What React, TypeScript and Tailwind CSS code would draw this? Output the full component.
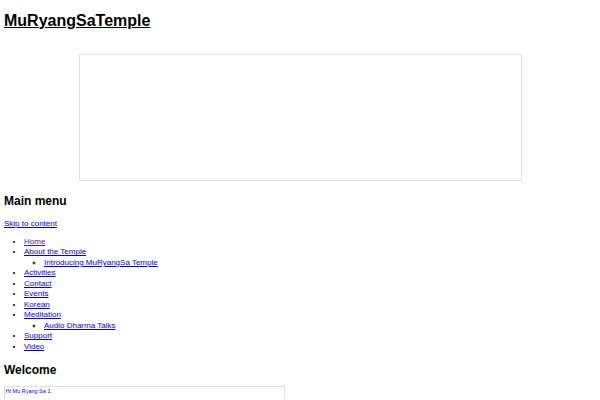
import React from "react";

const menu: { label: string; visited?: boolean; children?: string[] }[] = [
  { label: "Home", visited: true },
  { label: "About the Temple", children: ["Introducing MuRyangSa Temple"] },
  { label: "Activities" },
  { label: "Contact" },
  { label: "Events" },
  { label: "Korean" },
  { label: "Meditation", children: ["Audio Dharma Talks"] },
  { label: "Support" },
  { label: "Video" },
];

export default function App() {
  return (
    <div className="w-[600px] h-[400px] overflow-hidden bg-white px-[4px] pt-[11.5px] font-['Liberation_Sans',Arial,sans-serif] text-black">
      <h1 className="text-[16px] leading-[18px] font-bold">
        <a href="#" className="underline text-black">MuRyangSaTemple</a>
      </h1>

      <div className="mx-auto mt-[24.5px] w-[443px] h-[127px] border border-[#dedede] bg-white" />

      <h2 className="mt-[12.8px] text-[12px] leading-[14px] font-bold">Main menu</h2>

      <div className="mt-[11px] text-[8px] leading-[10.5px]">
        <a href="#" className="underline text-[#0000ee]">Skip to content</a>
      </div>

      <ul className="mt-[7.7px] [list-style-type:disc] pl-[20px] text-[8px] leading-[10.5px]">
        {menu.map((m) => (
          <li key={m.label}>
            <a href="#" className={m.visited ? "underline text-[#551a8b]" : "underline text-[#0000ee]"}>
              {m.label}
            </a>
            {m.children && (
              <ul className="[list-style-type:circle] pl-[20px]">
                {m.children.map((c) => (
                  <li key={c}>
                    <a href="#" className="underline text-[#0000ee]">{c}</a>
                  </li>
                ))}
              </ul>
            )}
          </li>
        ))}
      </ul>

      <h2 className="mt-[10.8px] text-[12px] leading-[14px] font-bold">Welcome</h2>

      <div className="mt-[9.2px] w-[281px] h-[60px] border border-[#dedede] px-[0.5px] pt-[1px]">
        <div className="text-[5.5px] leading-[7px] text-[#0000ee]">HI Mu Ryang Sa 1</div>
      </div>
    </div>
  );
}
